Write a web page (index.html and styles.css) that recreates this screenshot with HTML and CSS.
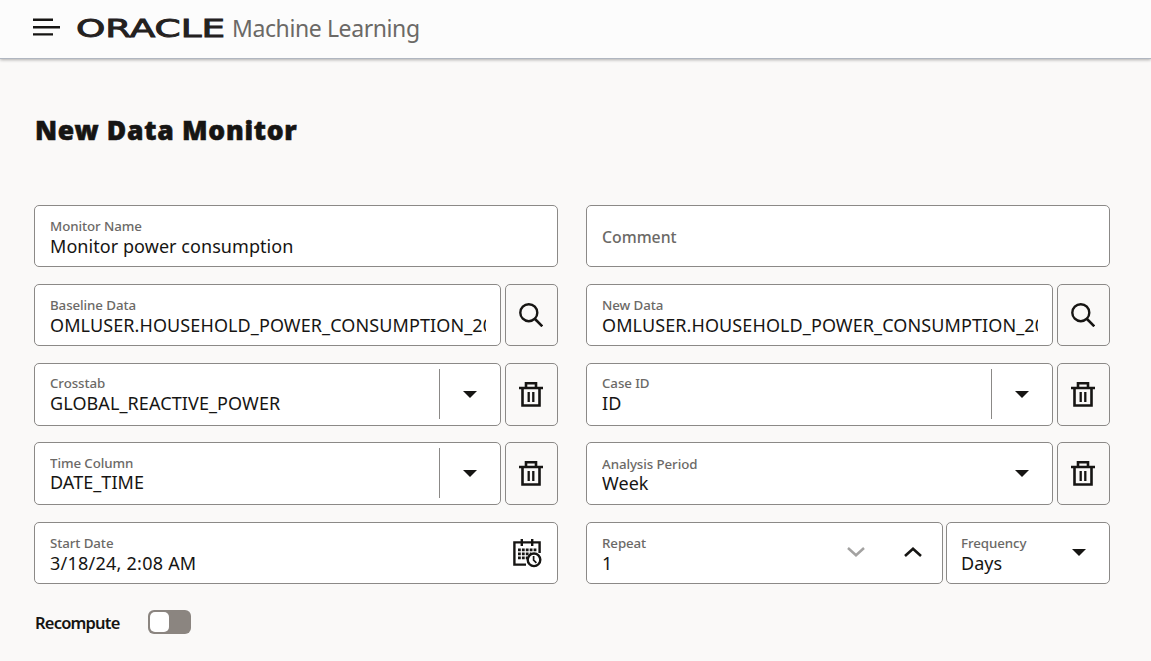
FILE: index.html
```html
<!DOCTYPE html>
<html lang="en">
<head>
<meta charset="utf-8">
<title>New Data Monitor</title>
<link rel="stylesheet" href="styles.css">
</head>
<body>
<svg class="defs" width="0" height="0">
  <symbol id="search" viewBox="0 0 24 24"><circle cx="9.8" cy="9.7" r="8.5" fill="none" stroke="currentColor" stroke-width="2.4"/><path d="M16 16L23.3 23.3" stroke="currentColor" stroke-width="2.6"/></symbol>
  <symbol id="trash" viewBox="0 0 24 25"><path d="M0 6h24M7 6V1.3h10V6M3.5 6v17.5h17V6" fill="none" stroke="currentColor" stroke-width="2.6"/><path d="M9.7 10v10M14.3 10v10" stroke="currentColor" stroke-width="2.3"/></symbol>
  <symbol id="caret" viewBox="0 0 14 7"><path d="M0 0h14L7 7z" fill="currentColor"/></symbol>
</svg>
<header class="header">
  <svg class="menu" width="28" height="18" viewBox="0 0 28 18"><path d="M0 1.8h20M0 9.2h27M0 16.4h20" stroke="#161513" stroke-width="2.4"/></svg>
  <svg class="logo" width="148" height="20" viewBox="0 0 148 20"><text x="-1" y="18.5" textLength="149" lengthAdjust="spacingAndGlyphs">ORACLE</text></svg>
  <span class="product">Machine Learning</span>
</header>
<main class="main">
  <h1 class="title">New Data Monitor</h1>
  <div class="form">
    <div class="row"><div class="field"><div class="text"><span class="label">Monitor Name</span><span class="value">Monitor power consumption</span></div></div></div>
    <div class="row"><div class="field"><span class="placeholder">Comment</span></div></div>

    <div class="row"><div class="field"><div class="text"><span class="label">Baseline Data</span><span class="value caps">OMLUSER.HOUSEHOLD_POWER_CONSUMPTION_20</span></div></div><button class="action"><svg width="24" height="24"><use href="#search"/></svg></button></div>
    <div class="row"><div class="field"><div class="text"><span class="label">New Data</span><span class="value caps">OMLUSER.HOUSEHOLD_POWER_CONSUMPTION_20</span></div></div><button class="action"><svg width="24" height="24"><use href="#search"/></svg></button></div>

    <div class="row tall raised"><div class="field"><div class="text"><span class="label">Crosstab</span><span class="value caps">GLOBAL_REACTIVE_POWER</span></div><span class="drop split"><svg width="14" height="7"><use href="#caret"/></svg></span></div><button class="action"><svg width="24" height="25"><use href="#trash"/></svg></button></div>
    <div class="row tall raised"><div class="field"><div class="text"><span class="label">Case ID</span><span class="value caps">ID</span></div><span class="drop split"><svg width="14" height="7"><use href="#caret"/></svg></span></div><button class="action"><svg width="24" height="25"><use href="#trash"/></svg></button></div>

    <div class="row tall"><div class="field"><div class="text tight"><span class="label">Time Column</span><span class="value">DATE_TIME</span></div><span class="drop split"><svg width="14" height="7"><use href="#caret"/></svg></span></div><button class="action"><svg width="24" height="25"><use href="#trash"/></svg></button></div>
    <div class="row tall"><div class="field"><div class="text lowered tight"><span class="label">Analysis Period</span><span class="value">Week</span></div><span class="drop"><svg width="14" height="7"><use href="#caret"/></svg></span></div><button class="action"><svg width="24" height="25"><use href="#trash"/></svg></button></div>

    <div class="row"><div class="field"><div class="text"><span class="label">Start Date</span><span class="value date">3/18/24, 2:08 AM</span></div>
      <svg class="calendar" width="29" height="29" viewBox="0 0 29 29">
        <path d="M13 25.6H1.4V3.4h25.2V14M8.8 0v7M19.2 0v7" fill="none" stroke="#161513" stroke-width="2.4"/>
        <path d="M5 10.8h19M5 14.8h13M5 18.8h9" stroke="#161513" stroke-width="2.7" stroke-dasharray="2.8 1.1"/>
        <circle cx="21" cy="20.8" r="6.3" fill="#fff" stroke="#161513" stroke-width="2.4"/>
        <path d="M20.6 17v4.2l2.8 2.6" fill="none" stroke="#161513" stroke-width="1.7"/>
      </svg></div></div>
    <div class="row repeat">
      <div class="field"><div class="text"><span class="label">Repeat</span><span class="value">1</span></div>
        <div class="stepper"><svg width="18" height="10" viewBox="0 0 18 10"><path d="M1 1L9 8.2L17 1" fill="none" stroke="#a3a2a1" stroke-width="2.5"/></svg><svg width="18" height="10" viewBox="0 0 18 10"><path d="M1 9L9 1.8L17 9" fill="none" stroke="#161513" stroke-width="2.6"/></svg></div></div>
      <div class="field frequency"><div class="text"><span class="label">Frequency</span><span class="value">Days</span></div><span class="drop"><svg width="14" height="7"><use href="#caret"/></svg></span></div>
    </div>
  </div>
  <div class="recompute"><span class="switch-label">Recompute</span><span class="switch"><span class="thumb"></span></span></div>
</main>
</body>
</html>
```
FILE: styles.css
```css
* { box-sizing: border-box; }
body { margin: 0; height: 661px; overflow: hidden; background: #faf9f8; color: #161513; font-family: "Noto Sans", sans-serif; }
.defs { position: absolute; }
.header { display: flex; align-items: flex-start; height: 59px; padding-left: 33px; background: #fcfcfc; border-bottom: 1px solid #b0b6c0; box-shadow: 0 1px 3px rgba(0,0,0,.3); }
.menu { margin-top: 18px; }
.logo { margin: 18px 0 0 16px; overflow: visible; }
.logo text { font: 24.5px "DejaVu Sans", sans-serif; fill: #24211f; stroke: #24211f; stroke-width: .9px; }
.product { margin-left: 7px; margin-top: 11px; font: 23px/34px "Noto Sans", sans-serif; color: #6b6966; letter-spacing: -.4px; white-space: nowrap; }
.main { padding: 0 41px 0 34px; }
.title { margin: 0; padding: 51px 0 0 1px; height: 146px; font-size: 26.5px; line-height: 40px; font-weight: 900; letter-spacing: .72px; -webkit-text-stroke: .6px #161513; white-space: nowrap; }
.form { display: grid; grid-template-columns: 524px 524px; grid-template-rows: 62px 62px 62px 63px 62px; gap: 17px 28px; }
.row { display: flex; gap: 4px; height: 62px; }
.row.tall { height: 63px; }
.row.repeat { gap: 3px; }
.field { display: flex; flex: 1; min-width: 0; background: #fff; border: 1px solid #8b8987; border-radius: 5px; }
.frequency { flex: none; width: 164px; }
.frequency .text { padding-left: 14px; }
.text { flex: 1; min-width: 0; padding: 11px 14px 0 15px; }
.raised .text { padding-top: 10px; }
.text.lowered { padding-top: 12px; }
.label, .value { display: block; overflow: hidden; white-space: nowrap; }
.label { font: 500 13.3px/19px "Noto Sans", sans-serif; color: #6b6966; letter-spacing: -.08px; }
.value { font: 18px/24px "Noto Sans", sans-serif; letter-spacing: .06px; margin-top: -2px; }
.value.caps { letter-spacing: .1px; }
.value.date { letter-spacing: .24px; }
.tight .value { margin-top: -3px; }
.placeholder { padding: 19px 15px; font: 500 15.8px/24px "Noto Sans", sans-serif; color: #6b6966; }
.drop { flex: none; width: 61px; height: 50px; margin-top: 5px; display: flex; justify-content: center; align-items: center; }
.drop.split { border-left: 1px solid #8b8987; }
.action { flex: none; width: 53px; display: grid; place-items: center; padding: 0 1px 0 0; background: #faf9f8; border: 1px solid #8b8987; border-radius: 5px; color: #161513; }
.calendar { margin: 16px 15px 0 0; }
.stepper { display: flex; gap: 39px; padding: 24px 20px 0 0; }
.frequency .drop { margin-top: 4px; }
.recompute { display: flex; align-items: center; height: 24px; margin-top: 26px; }
.switch-label { width: 114px; padding: 2px 0 0 1px; font: 600 16.5px/24px "Noto Sans", sans-serif; letter-spacing: -.8px; }
.switch { width: 43px; height: 24px; padding: 2px; border-radius: 6px; background: #8b8580; }
.thumb { display: block; width: 19px; height: 20px; border-radius: 5px; background: #fff; }
```
